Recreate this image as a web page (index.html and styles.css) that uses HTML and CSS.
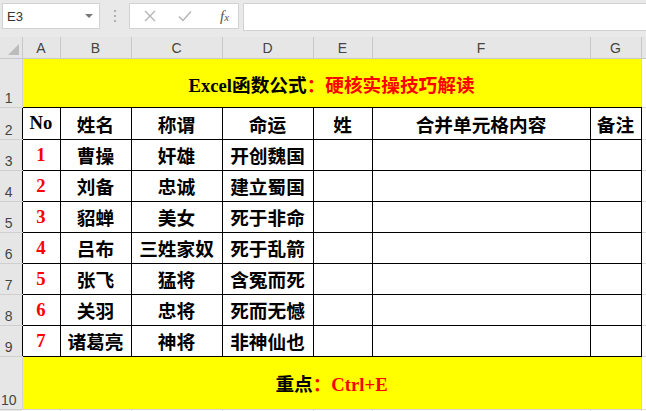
FILE: index.html
```html
<!DOCTYPE html>
<html lang="zh-CN">
<head>
    <meta charset="UTF-8">
    <title>Excel函数公式</title>
    <link rel="stylesheet" href="styles.css">
</head>
<body>
    <div class="toolbar">
        <div class="namebox">
            <span>E3</span>
            <span class="caret"></span>
        </div>
        <div class="grip"><i></i><i></i><i></i></div>
        <div class="fnbox">
            <svg class="ico" width="12" height="12" viewBox="0 0 12 12">
                <path d="M1 1 L11 11 M11 1 L1 11" stroke="#b4b4b4" stroke-width="1.4" fill="none"/>
            </svg>
            <svg class="ico" width="14" height="12" viewBox="0 0 14 12">
                <path d="M1 6.5 L5 10.5 L13 1.5" stroke="#b4b4b4" stroke-width="1.4" fill="none"/>
            </svg>
            <span class="fx">f<small>x</small></span>
        </div>
        <div class="formula"></div>
    </div>

    <table class="sheet">
        <colgroup>
            <col style="width:22px">
            <col style="width:38px">
            <col style="width:71px">
            <col style="width:91px">
            <col style="width:91px">
            <col style="width:59px">
            <col style="width:218px">
            <col style="width:51px">
            <col style="width:5px">
        </colgroup>
        <tr class="colhdr">
            <th class="corner"><span class="tri"></span></th>
            <th>A</th><th>B</th><th>C</th><th>D</th><th>E</th><th>F</th><th>G</th><th class="rest"></th>
        </tr>
        <tr class="r-title">
            <th class="rowhdr">1</th>
            <td colspan="7" class="band band-top">Excel函数公式<span class="red">：硬核实操技巧解读</span></td>
            <td class="grid"></td>
        </tr>
        <tr class="r-head">
            <th class="rowhdr">2</th>
            <td class="cell">No</td><td class="cell">姓名</td><td class="cell">称谓</td><td class="cell">命运</td>
            <td class="cell">姓</td><td class="cell">合并单元格内容</td><td class="cell">备注</td>
            <td class="grid"></td>
        </tr>
        <tr class="r-data">
            <th class="rowhdr">3</th>
            <td class="cell red">1</td><td class="cell">曹操</td><td class="cell">奸雄</td><td class="cell">开创魏国</td>
            <td class="cell"></td><td class="cell"></td><td class="cell"></td><td class="grid"></td>
        </tr>
        <tr class="r-data">
            <th class="rowhdr">4</th>
            <td class="cell red">2</td><td class="cell">刘备</td><td class="cell">忠诚</td><td class="cell">建立蜀国</td>
            <td class="cell"></td><td class="cell"></td><td class="cell"></td><td class="grid"></td>
        </tr>
        <tr class="r-data">
            <th class="rowhdr">5</th>
            <td class="cell red">3</td><td class="cell">貂蝉</td><td class="cell">美女</td><td class="cell">死于非命</td>
            <td class="cell"></td><td class="cell"></td><td class="cell"></td><td class="grid"></td>
        </tr>
        <tr class="r-data">
            <th class="rowhdr">6</th>
            <td class="cell red">4</td><td class="cell">吕布</td><td class="cell">三姓家奴</td><td class="cell">死于乱箭</td>
            <td class="cell"></td><td class="cell"></td><td class="cell"></td><td class="grid"></td>
        </tr>
        <tr class="r-data">
            <th class="rowhdr">7</th>
            <td class="cell red">5</td><td class="cell">张飞</td><td class="cell">猛将</td><td class="cell">含冤而死</td>
            <td class="cell"></td><td class="cell"></td><td class="cell"></td><td class="grid"></td>
        </tr>
        <tr class="r-data">
            <th class="rowhdr">8</th>
            <td class="cell red">6</td><td class="cell">关羽</td><td class="cell">忠将</td><td class="cell">死而无憾</td>
            <td class="cell"></td><td class="cell"></td><td class="cell"></td><td class="grid"></td>
        </tr>
        <tr class="r-data">
            <th class="rowhdr">9</th>
            <td class="cell red">7</td><td class="cell">诸葛亮</td><td class="cell">神将</td><td class="cell">非神仙也</td>
            <td class="cell"></td><td class="cell"></td><td class="cell"></td><td class="grid"></td>
        </tr>
        <tr class="r-foot">
            <th class="rowhdr">10</th>
            <td colspan="7" class="band">重点<span class="red">：Ctrl+E</span></td>
            <td class="grid"></td>
        </tr>
        <tr class="r-tail">
            <th class="rowhdr"></th>
            <td class="grid"></td><td class="grid"></td><td class="grid"></td><td class="grid"></td>
            <td class="grid"></td><td class="grid"></td><td class="grid"></td><td class="grid"></td>
        </tr>
    </table>
</body>
</html>
```

FILE: styles.css
```css
body {
    margin: 0;
    padding: 0;
    width: 646px;
    height: 411px;
    overflow: hidden;
    background: #fff;
    font-family: 'Liberation Sans', 'Noto Sans CJK SC', sans-serif;
}

/* 编辑栏 */
.toolbar {
    display: flex;
    align-items: flex-start;
    height: 37px;
    box-sizing: border-box;
    padding: 3px 0 0 2px;
    background: #e9e9e9;
}

.namebox {
    display: flex;
    align-items: center;
    justify-content: space-between;
    width: 98px;
    height: 26px;
    box-sizing: border-box;
    padding: 0 6px 0 4px;
    background: #fff;
    border: 1px solid #d2d2d2;
    font-size: 13px;
    color: #333;
}

.caret {
    width: 0;
    height: 0;
    border-left: 4px solid transparent;
    border-right: 4px solid transparent;
    border-top: 4px solid #777;
}

.grip {
    width: 29px;
    height: 26px;
    display: flex;
    flex-direction: column;
    align-items: center;
    justify-content: center;
    gap: 3px;
}

.grip i {
    width: 2px;
    height: 2px;
    background: #b0b0b0;
}

.fnbox {
    display: flex;
    align-items: center;
    width: 110px;
    height: 26px;
    box-sizing: border-box;
    padding: 0 0 0 14px;
    background: #fff;
    border: 1px solid #d2d2d2;
}

.fnbox .ico {
    margin-right: 22px;
}

.fnbox .ico + .ico {
    margin-right: 28px;
}

.fx {
    font-family: 'Liberation Serif', serif;
    font-style: italic;
    font-size: 15px;
    color: #555;
}

.fx small {
    font-size: 11px;
}

.formula {
    flex: 1;
    height: 26px;
    margin-left: 4px;
    background: #fff;
    border: 1px solid #d2d2d2;
    border-right: 0;
}

/* 表格 */
.sheet {
    table-layout: fixed;
    border-collapse: collapse;
    width: 646px;
}

.sheet th,
.sheet td {
    padding: 0;
}

.colhdr {
    height: 21px;
}

.colhdr th {
    background: #e6e6e6;
    border-right: 1px solid #c8c8c8;
    border-bottom: 1px solid #c8c8c8;
    font-weight: normal;
    font-size: 14px;
    color: #444;
    vertical-align: bottom;
    line-height: 17px;
    padding-bottom: 1px;
}

.colhdr th.rest {
    border-right: 0;
}

.corner {
    position: relative;
}

.tri {
    position: absolute;
    right: 3px;
    bottom: 3px;
    width: 0;
    height: 0;
    border-left: 11px solid transparent;
    border-bottom: 11px solid #bcbcbc;
}

.rowhdr {
    background: #e6e6e6;
    border-bottom: 1px solid #cfcfcf;
    font-weight: normal;
    font-size: 14px;
    color: #444;
    text-align: center;
    vertical-align: bottom;
    line-height: 16px;
    padding: 0 4px 1px 0 !important;
}

.r-title { height: 49px; }
.r-head { height: 32px; }
.r-data { height: 31px; }
.r-foot { height: 53px; }
.r-tail { height: 8px; }

.band {
    background: #ffff00;
    border: 1px solid #d4d4d4;
    text-align: center;
    font-family: 'Liberation Serif', 'Noto Sans CJK SC', serif;
    font-weight: bold;
    font-size: 18.67px;
    color: #000;
}

.band-top {
    border-bottom: 1px solid #000;
}

.r-title .band {
    padding-top: 2px;
}

.cell {
    border: 1px solid #000;
    text-align: center;
    font-family: 'Liberation Serif', 'Noto Sans CJK SC', serif;
    font-weight: bold;
    font-size: 18.67px;
    color: #000;
    white-space: nowrap;
    overflow: hidden;
}

.grid {
    border-right: 1px solid #dadada;
    border-bottom: 1px solid #dadada;
}

.red {
    color: #ff0000;
}
```
